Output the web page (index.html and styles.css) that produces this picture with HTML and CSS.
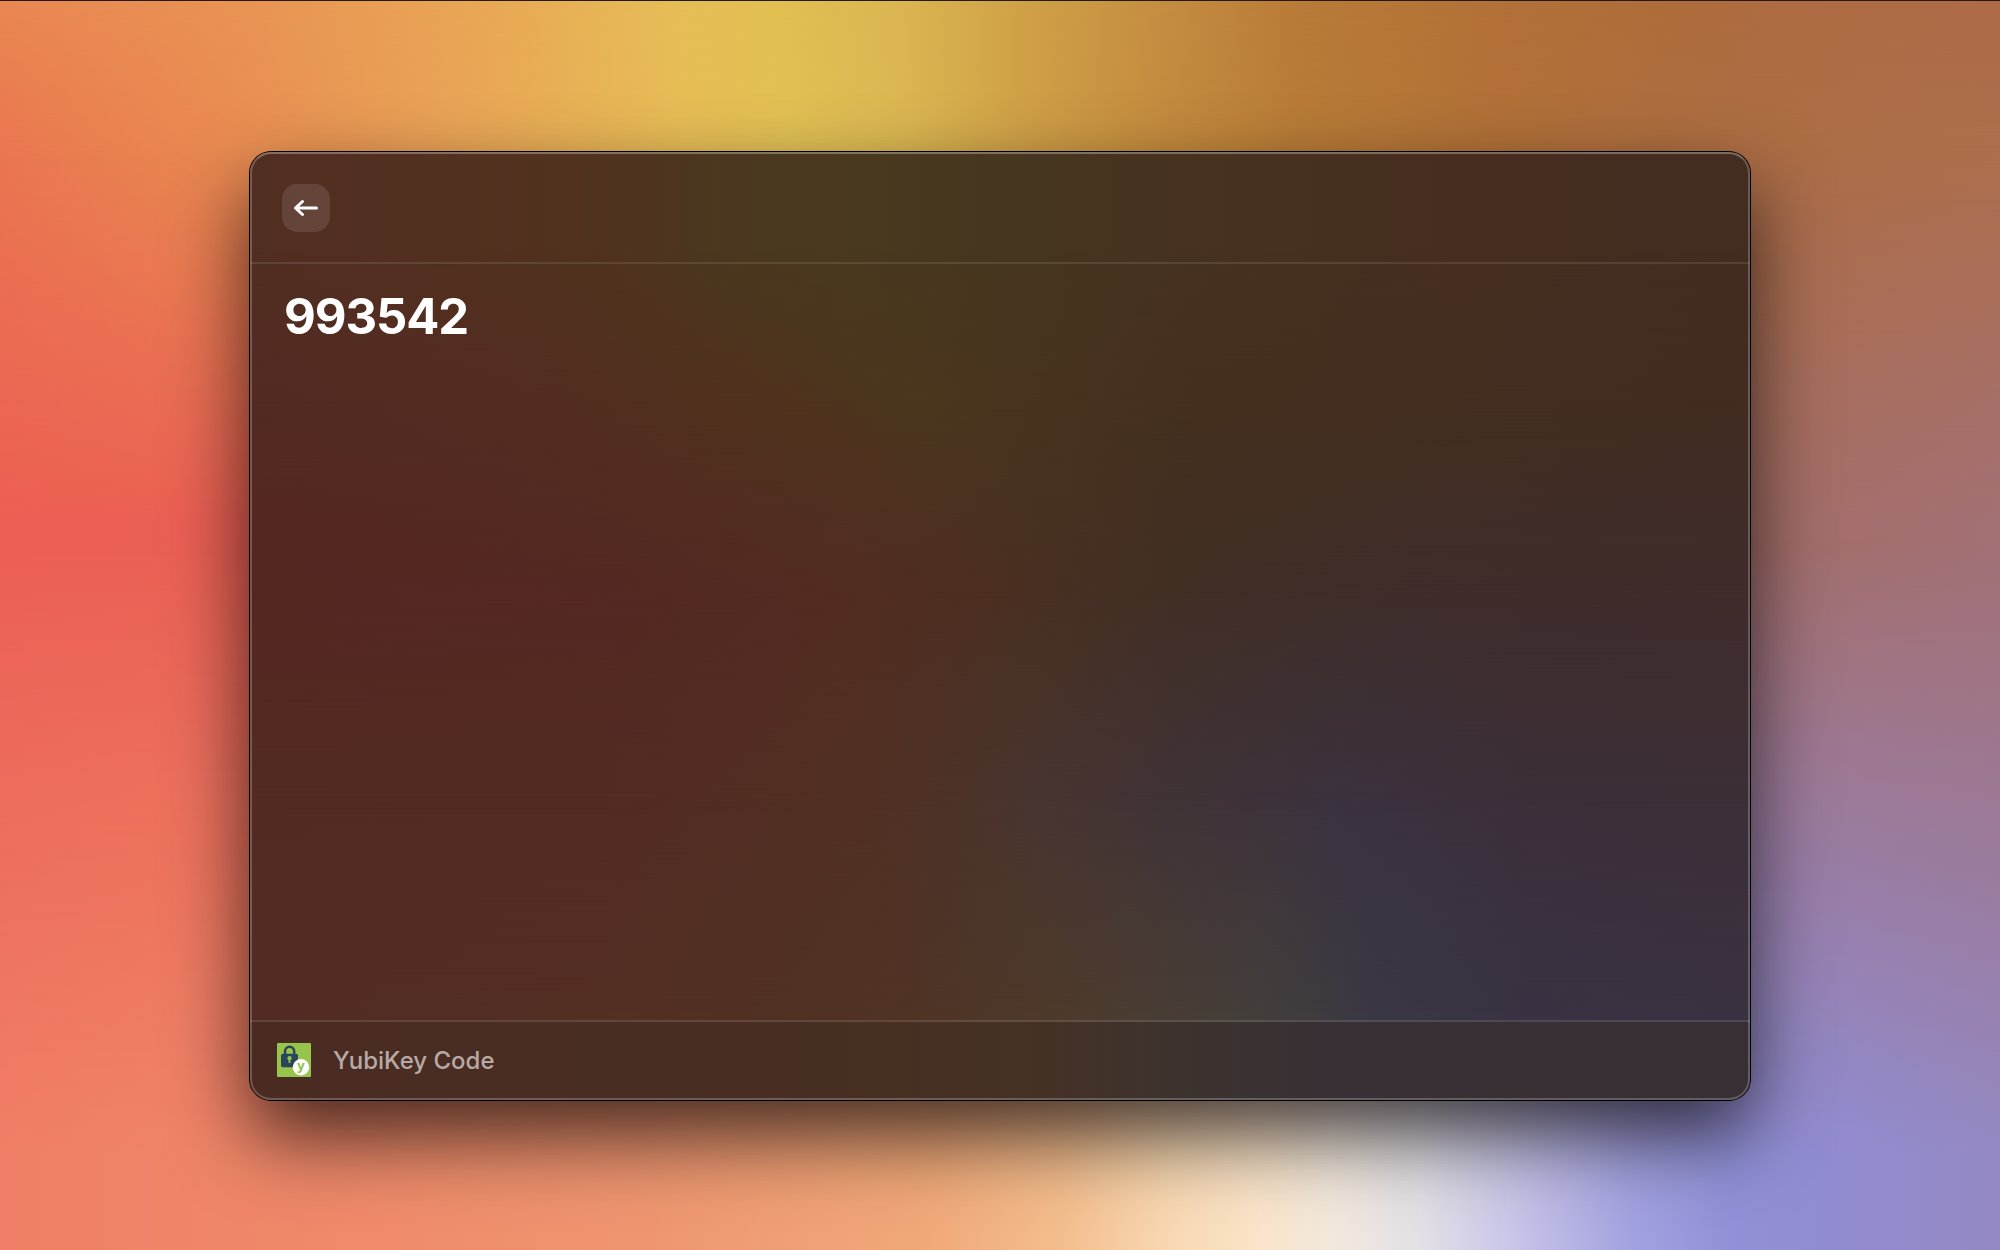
FILE: index.html
```html
<!DOCTYPE html>
<html lang="en">
<head>
<meta charset="utf-8">
<title>YubiKey Code</title>
<link rel="stylesheet" href="styles.css">
</head>
<body>
<div class="desktop">
  <div class="wall wall-1"></div>
  <div class="wall wall-2"></div>
  <div class="wall wall-3"></div>
  <div class="wall wall-4"></div>
  <div class="wall wall-5"></div>
  <main class="window">
    <div class="tint tint-1"></div>
    <div class="tint tint-2"></div>
    <div class="tint tint-3"></div>
    <div class="tint tint-4"></div>
    <div class="tint tint-5"></div>
    <header class="header">
      <button class="back" aria-label="Back">
        <svg width="48" height="48" viewBox="0 0 48 48" fill="none" stroke="#fff" stroke-width="3" stroke-linecap="round" stroke-linejoin="round"><path d="M34.5 24H14M20.5 17.5L13.5 24L20.5 30.5"/></svg>
      </button>
    </header>
    <section class="content"><h1 class="code">993542</h1></section>
    <footer class="footer">
      <svg class="logo" width="34" height="34" viewBox="0 0 34 34">
        <rect width="34" height="34" rx="1" fill="#97c54b"/>
        <path d="M8 12V8.6a4.6 4.9 0 0 1 9.2 0V12" fill="none" stroke="#2b465c" stroke-width="2.5"/>
        <rect x="4" y="10.8" width="17" height="13.4" rx="2" fill="#2b465c"/>
        <circle cx="12.5" cy="15.2" r="2.1" fill="#97c54b"/>
        <path d="M11.6 15h1.8v5h-1.8z" fill="#97c54b"/>
        <circle cx="24" cy="24.2" r="8.2" fill="#fff"/>
        <text class="logo-letter" x="24" y="26.8" text-anchor="middle">y</text>
      </svg>
      <span class="name">YubiKey Code</span>
    </footer>
  </main>
</div>
</body>
</html>
```
FILE: styles.css
```css
* { box-sizing: border-box; }
body { margin: 0; font-family: Inter, "Liberation Sans", sans-serif; }

.desktop {
  position: relative;
  width: 2000px;
  height: 1250px;
  padding: 152px 250px 150px;
  overflow: hidden;
  display: flex;
}
.desktop::after {
  content: "";
  position: absolute;
  inset: 0 0 auto;
  height: 1px;
  background: #24190f;
}

/* Wallpaper: horizontal gradients, each fading into the next down the page */
.wall { position: absolute; inset: 0; }
.wall-1 { background: linear-gradient(90deg, #ea8753 0, #e99454 250px, #e9a955 500px, #e6be57 680px, #e2c052 770px, #dbb652 900px, #d0a247 1020px, #c68f42 1150px, #b97b38 1300px, #b27137 1500px, #ae6c3a 1680px, #ae6c44 1800px, #ae6b48 2000px); }
.wall-2 { background: linear-gradient(90deg, #ea7650 0, #e98851 200px, #e9a357 450px, #e6bc55 680px, #e2c054 790px, #dbb752 900px, #cfa047 1020px, #c48c3e 1150px, #b87b37 1300px, #b17038 1500px, #ad6d45 1750px, #ad6e4b 2000px); mask-image: linear-gradient(transparent 0, #000 150px); }
.wall-3 { background: linear-gradient(90deg, #ec5f54 0, #ea6054 250px, #a46e68 1750px, #a37074 2000px); mask-image: linear-gradient(transparent 150px, #000 520px); }
.wall-4 { background: linear-gradient(90deg, #ed6f5e 0, #ed745f 250px, #9a7da4 1750px, #9b7a9a 2000px); mask-image: linear-gradient(transparent 540px, #000 840px); }
.wall-5 { background: linear-gradient(90deg, #f07e68 0, #ef8869 300px, #ef9670 650px, #f1a979 930px, #f4bd8d 1060px, #f8d8b2 1170px, #fae4ca 1260px, #f3e8dc 1330px, #e3e0e6 1420px, #c9c6e8 1510px, #a3a2e0 1630px, #9190d8 1730px, #918cd1 1830px, #9489c3 2000px); mask-image: linear-gradient(transparent 840px, #000 1150px); }

.window {
  position: relative;
  flex: 1;
  display: flex;
  flex-direction: column;
  border-radius: 21px;
  overflow: hidden;
  box-shadow: 0 0 0 1px #000, 0 36px 80px rgba(0, 0, 0, .7);
}
.window::after {
  content: "";
  position: absolute;
  inset: 0;
  border: 2px solid rgba(255, 255, 255, .22);
  border-top-color: rgba(255, 255, 255, .3);
  border-radius: 21px;
}

/* Translucent panel colours, blended the same way as the wallpaper */
.tint { position: absolute; inset: 0; }
.tint-1 { background: linear-gradient(90deg, #512e22 0, #52301f 200px, #50321e 330px, #4b371f 480px, #49391f 610px, #46351f 790px, #46311f 990px, #472d20 1200px, #432c20 1500px); }
.tint-2 { background: linear-gradient(90deg, #532a22 0, #532c21 250px, #50311d 480px, #4b361e 670px, #47331e 800px, #442f1e 950px, #422c22 1500px); mask-image: linear-gradient(transparent 100px, #000 250px); }
.tint-3 { background: linear-gradient(90deg, #552722 0, #542823 350px, #522c21 600px, #4b2f21 750px, #412f25 930px, #3e2d2a 1150px, #3f2c2b 1500px); mask-image: linear-gradient(transparent 250px, #000 440px); }
.tint-4 { background: linear-gradient(90deg, #532b23 0, #532b23 350px, #513023 620px, #483530 780px, #403337 920px, #3b3240 1090px, #3c2f3a 1280px, #3c2f38 1500px); mask-image: linear-gradient(transparent 440px, #000 660px); }
.tint-5 { background: linear-gradient(90deg, #522c24 0, #532e23 350px, #4f3325 650px, #4d392a 800px, #4a3c31 880px, #433e3b 1010px, #3a3744 1130px, #393242 1280px, #3a3140 1500px); mask-image: linear-gradient(transparent 640px, #000 860px); }

.header {
  position: relative;
  display: flex;
  align-items: center;
  height: 112px;
  padding: 0 32px;
  border-bottom: 2px solid rgba(255, 255, 255, .1);
}
.back {
  width: 48px;
  height: 48px;
  margin-bottom: -2px;
  padding: 0;
  border: 0;
  border-radius: 15px;
  background: rgba(255, 255, 255, .11);
}
.back svg { display: block; }
.content { position: relative; flex: 1; padding: 23px 34px; }
.code { margin: 0; font-size: 49px; line-height: 60px; font-weight: 700; letter-spacing: -1.1px; color: #fff; }
.footer {
  position: relative;
  display: flex;
  align-items: center;
  gap: 22px;
  height: 80px;
  padding: 0 27px 2px;
  border-top: 2px solid rgba(255, 255, 255, .11);
  background: linear-gradient(90deg, #4a2b22 0, #472f22 650px, #443126 800px, #3c332e 930px, #393035 1060px, #382f34 1500px) padding-box;
}
.logo-letter { font: 700 13px "Open Sans", sans-serif; fill: #8fbf45; }
.name { margin-top: 1px; font-size: 24px; line-height: 30px; font-weight: 500; color: #b7aaa6; }
```
